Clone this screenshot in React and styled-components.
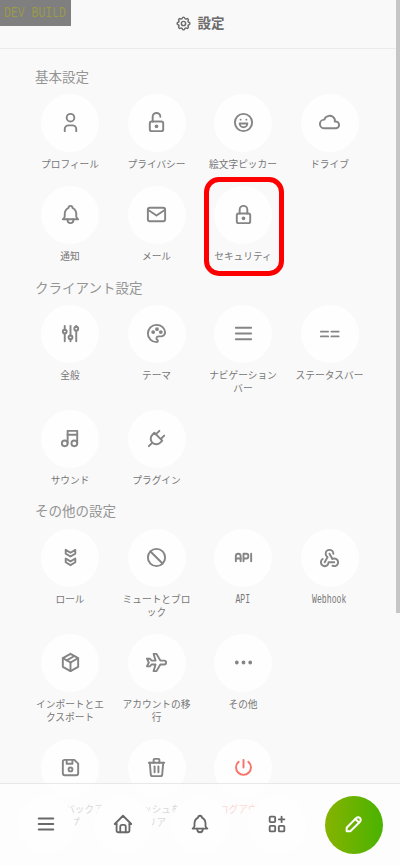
import React from 'react';
import styled, { createGlobalStyle, css } from 'styled-components';
import {
  TbSettings, TbUser, TbLockOpen, TbMoodHappy, TbCloud, TbBell, TbMail, TbLock,
  TbAdjustments, TbPalette, TbMenu2, TbMusic, TbPlug, TbBadges, TbBan, TbApi,
  TbWebhook, TbPackage, TbPlane, TbDots, TbDeviceFloppy, TbTrash, TbPower,
  TbHome, TbApps, TbPencil,
} from 'react-icons/tb';

const GlobalStyle = createGlobalStyle`
  * { box-sizing: border-box; }
  body {
    margin: 0;
    background: #f9f9f9;
    font-family: "Noto Sans CJK JP", "Noto Sans", sans-serif;
    overflow: hidden;
  }
`;

const Screen = styled.div`
  position: relative;
  height: 865px;
  overflow: hidden;
  background: #f9f9f9;
`;

const Header = styled.header`
  display: flex;
  align-items: center;
  justify-content: center;
  gap: 6px;
  height: 49px;
  padding: 0 1px 4px 0;
  border-bottom: 1px solid #ebebeb;
  color: #6c6c6c;
  font-size: 13.5px;
  font-weight: 700;
  svg { width: 17px; height: 17px; margin-top: 3px; stroke-width: 2.1px; }
`;

const DevBadge = styled.div`
  position: absolute;
  top: 0;
  left: 0;
  z-index: 3;
  width: 70.5px;
  height: 26px;
  padding: 1px 0 0 4px;
  background: #7f7f7f;
  color: #9a9a4a;
  font: 15px/26px "Liberation Mono", monospace;
  white-space: pre;
  span { display: inline-block; transform: scaleX(0.765); transform-origin: left; }
`;

const Scrollbar = styled.div`
  position: absolute;
  top: 0;
  right: 0;
  z-index: 2;
  width: 4px;
  height: 613px;
  background: #c6c6c6;
`;

const Content = styled.main`
  padding: 18.7px 27px 0;
`;

const Section = styled.section`
  margin-bottom: 15.6px;
`;

const SectionTitle = styled.h2`
  margin: 0 0 9.6px;
  padding-left: 8px;
  color: #949494;
  font-size: 13.5px;
  font-weight: 400;
  line-height: 17px;
`;

const Grid = styled.div`
  display: grid;
  grid-template-columns: repeat(4, 74px);
  column-gap: 12.5px;
  row-gap: 15.3px;
  padding-left: 6px;
`;

const Item = styled.a`
  position: relative;
  display: flex;
  flex-direction: column;
  align-items: center;
  color: ${(p) => (p.$danger ? '#f77468' : '#858585')};
`;

const Circle = styled.span`
  display: flex;
  align-items: center;
  justify-content: center;
  width: 58px;
  height: 58px;
  padding-bottom: 1.6px;
  border-radius: 50%;
  background: #fefefe;
  svg { width: 23px; height: 23px; }
`;

const Label = styled.span`
  margin-top: 5.7px;
  color: ${(p) => (p.$danger ? '#f77468' : '#777')};
  font-size: 9.7px;
  line-height: 13px;
  text-align: center;
  word-break: break-all;
  ${(p) => p.$latin && css`
    font-family: "Liberation Mono", monospace;
    font-size: 12px;
    transform: translateY(1px) scaleX(0.68);
  `}
`;

const Highlight = styled.span`
  position: absolute;
  top: -9px;
  left: -2px;
  width: 80px;
  height: 99px;
  border: 5px solid #fe0000;
  border-radius: 15px;
`;

const NavBar = styled.nav`
  position: absolute;
  inset: auto 0 0 0;
  z-index: 1;
  display: flex;
  justify-content: space-between;
  height: 82px;
  padding: 12px 17.5px 0 17px;
  border-top: 1px solid #e8e8e8;
  background: rgba(254, 254, 254, 0.72);
`;

const NavButton = styled.button`
  display: flex;
  align-items: center;
  justify-content: center;
  width: 58px;
  height: 58px;
  padding: 0 0 3px;
  border: 0;
  border-radius: 50%;
  background: ${(p) => (p.$primary ? 'linear-gradient(90deg, #86b300, #4ab300)' : '#fefefe')};
  color: ${(p) => (p.$primary ? '#fff' : '#696969')};
  svg { width: 22px; height: 22px; stroke-width: ${(p) => (p.$primary ? 2.2 : 2)}px; }
`;

const DoubleEquals = () => (
  <svg viewBox="0 0 24 24" fill="none" stroke="currentColor" strokeWidth="2" strokeLinecap="round">
    <path d="M3 10h7.5M14 10h7.5M3 15h7.5M14 15h7.5" />
  </svg>
);

const sections = [
  ['基本設定', [
    [TbUser, 'プロフィール'],
    [TbLockOpen, 'プライバシー'],
    [TbMoodHappy, '絵文字ピッカー'],
    [TbCloud, 'ドライブ'],
    [TbBell, '通知'],
    [TbMail, 'メール'],
    [TbLock, 'セキュリティ', { highlight: true }],
  ]],
  ['クライアント設定', [
    [TbAdjustments, '全般'],
    [TbPalette, 'テーマ'],
    [TbMenu2, 'ナビゲーションバー'],
    [DoubleEquals, 'ステータスバー'],
    [TbMusic, 'サウンド'],
    [TbPlug, 'プラグイン'],
  ]],
  ['その他の設定', [
    [TbBadges, 'ロール'],
    [TbBan, 'ミュートとブロック'],
    [TbApi, 'API', { latin: true }],
    [TbWebhook, 'Webhook', { latin: true }],
    [TbPackage, 'インポートとエクスポート'],
    [TbPlane, 'アカウントの移行'],
    [TbDots, 'その他'],
    null,
    [TbDeviceFloppy, '設定のバックアップ'],
    [TbTrash, 'キャッシュをクリア'],
    [TbPower, 'ログアウト', { danger: true }],
  ]],
];

const navIcons = [TbMenu2, TbHome, TbBell, TbApps];

function SettingsItem({ icon: Icon, label, highlight, latin, danger }) {
  return (
    <Item $danger={danger}>
      <Circle><Icon /></Circle>
      <Label $latin={latin} $danger={danger}>{label}</Label>
      {highlight && <Highlight />}
    </Item>
  );
}

export default function App() {
  return (
    <Screen>
      <GlobalStyle />
      <DevBadge><span>DEV BUILD</span></DevBadge>
      <Header><TbSettings />設定</Header>
      <Content>
        {sections.map(([title, items]) => (
          <Section key={title}>
            <SectionTitle>{title}</SectionTitle>
            <Grid>
              {items.map((item, i) => (item
                ? <SettingsItem key={item[1]} icon={item[0]} label={item[1]} {...item[2]} />
                : <span key={i} />))}
            </Grid>
          </Section>
        ))}
      </Content>
      <Scrollbar />
      <NavBar>
        {navIcons.map((Icon, i) => <NavButton key={i}><Icon /></NavButton>)}
        <NavButton $primary><TbPencil /></NavButton>
      </NavBar>
    </Screen>
  );
}
